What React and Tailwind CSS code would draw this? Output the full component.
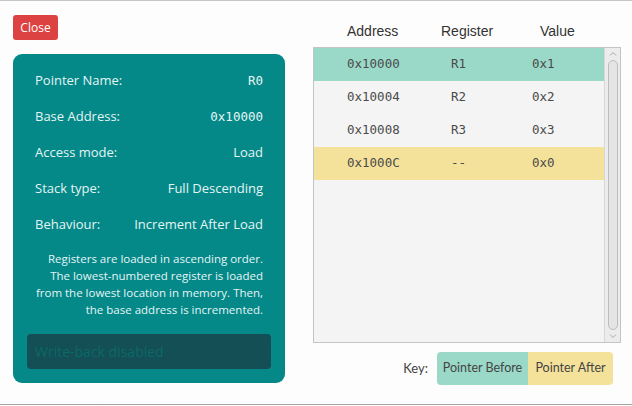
import React from 'react';

const sans = { fontFamily: '"Open Sans", "Noto Sans", sans-serif' };

const pointerInfo = [
  { label: 'Pointer Name:', value: 'R0', mono: true },
  { label: 'Base Address:', value: '0x10000', mono: true },
  { label: 'Access mode:', value: 'Load' },
  { label: 'Stack type:', value: 'Full Descending' },
  { label: 'Behaviour:', value: 'Increment After Load' },
];

const memoryRows = [
  { address: '0x10000', register: 'R1', value: '0x1', kind: 'before' },
  { address: '0x10004', register: 'R2', value: '0x2' },
  { address: '0x10008', register: 'R3', value: '0x3' },
  { address: '0x1000C', register: '--', value: '0x0', kind: 'after' },
];

const ghostRows = [
  { reg: 'R7', value: '0x0' },
  { reg: 'R8', value: '0x0' },
  { reg: '', value: '0x0' },
  { reg: '', value: '0x0' },
  { reg: '', value: '0x0' },
  { reg: '', value: 'FF00' },
  { reg: '', value: '0x0' },
  { reg: '', value: '0x2' },
];

// faint page that sits behind the modal
const GhostPage = () => (
  <div className="flex w-full h-full">
    <div className="w-[103px] h-full border-r border-[#f6f3ea]" />
    <div className="flex flex-col ml-[21px] -mt-[8px]">
      {ghostRows.map((row, i) => (
        <div key={i} className="flex items-center h-[35px] border-b border-[#f6f6f6]">
          <div className="w-[46px] h-[27px] rounded bg-[#f7f7f7] text-[#efefef] text-[15px] flex items-center justify-center">
            {row.reg}
          </div>
          <div className="w-[120px]" />
          <div className="font-['DejaVu_Sans_Mono',monospace] text-[14px] text-[#eeeeee]">{row.value}</div>
        </div>
      ))}
    </div>
    <div className="flex flex-col ml-[122px] -mt-[6px] gap-[10px]">
      {[0, 1].map((i) => (
        <div key={i} className="w-[137px] h-[24px] bg-[#f4f9f9]" />
      ))}
    </div>
  </div>
);

const ScrollBar = () => (
  <div className="w-[16px] h-full bg-[#ececec] border-l border-[#d8d8d8] flex flex-col items-center">
    <svg width="10" height="10" viewBox="0 0 10 10" className="mt-[1px]">
      <path d="M2 6.5 L5 3.5 L8 6.5" fill="none" stroke="#a8a8a8" strokeWidth="1" />
    </svg>
    <div className="flex-1 w-[10px] rounded-[5px] border border-[#bdbdbd] bg-[#e4e4e4] my-[1px]" />
    <svg width="10" height="10" viewBox="0 0 10 10" className="mb-[1px]">
      <path d="M2 3.5 L5 6.5 L8 3.5" fill="none" stroke="#a8a8a8" strokeWidth="1" />
    </svg>
  </div>
);

const App = () => {
  return (
    <div className="relative w-[632px] h-[406px] overflow-hidden bg-white" style={sans}>
      <GhostPage />

      {/* Modal */}
      <div className="absolute left-0 top-0 w-[632px] h-[405px] bg-[#fdfdfd]/95 border-t border-[#c6c6c6] border-b border-b-[#a4a4a4] flex pl-[13px]">
        {/* Left column */}
        <div className="w-[272px] flex flex-col pt-[14px]">
          <button className="self-start w-[45px] h-[25px] rounded-[3px] bg-[#dd4242] text-white text-[12px] leading-none">
            Close
          </button>

          <div className="mt-[14px] bg-[#048888] rounded-[9px] px-[14px] pt-[9px] pb-[14px] text-[#e4f5f5]">
            <div className="px-[8px]">
              {pointerInfo.map((item) => (
                <div key={item.label} className="flex justify-between items-center h-[36px] text-[13px]">
                  <span>{item.label}</span>
                  <span className={item.mono ? "font-['DejaVu_Sans_Mono',monospace] text-[12.5px]" : ''}>
                    {item.value}
                  </span>
                </div>
              ))}
              <p className="mt-[7px] text-right text-[11.5px] leading-[17px] whitespace-nowrap">
                Registers are loaded in ascending order.
                <br />
                The lowest-numbered register is loaded
                <br />
                from the lowest location in memory. Then,
                <br />
                the base address is incremented.
              </p>
            </div>
            <div className="mt-[16px] h-[35px] rounded-[4px] bg-[#134f55] text-[#0d6868] text-[14px] flex items-center px-[8px]">
              Write-back disabled
            </div>
          </div>
        </div>

        {/* Right column */}
        <div className="ml-[28px] w-[308px] flex flex-col">
          <div className="h-[46px] flex items-end pb-[5px] font-['Liberation_Sans',Arial,sans-serif] text-[14px] text-[#333]">
            <span className="ml-[34px] w-[94px]">Address</span>
            <span className="w-[99px]">Register</span>
            <span>Value</span>
          </div>

          <div className="h-[296px] border border-[#c4c4c4] bg-[#f4f4f4] flex">
            <div className="flex-1 flex flex-col">
              {memoryRows.map((row) => (
                <div
                  key={row.address}
                  className={`flex items-center h-[33px] font-['DejaVu_Sans_Mono',monospace] text-[12.5px] text-[#4a4a4a] ${
                    row.kind === 'before' ? 'bg-[#9ad9c7]' : row.kind === 'after' ? 'bg-[#f5e29a]' : ''
                  }`}
                >
                  <span className="ml-[33px] w-[104px]">{row.address}</span>
                  <span className="w-[81px]">{row.register}</span>
                  <span>{row.value}</span>
                </div>
              ))}
            </div>
            <ScrollBar />
          </div>

          <div className="mt-[9px] flex items-center justify-end pr-[8px] font-['Lato',sans-serif] text-[12.5px] text-[#444]">
            <span className="mr-[9px] text-[13px]">Key:</span>
            <div className="flex h-[33px] rounded-[4px] overflow-hidden">
              <span className="bg-[#9ad9c7] flex items-center w-[91px] justify-center">Pointer Before</span>
              <span className="bg-[#f5e29a] flex items-center w-[85px] justify-center">Pointer After</span>
            </div>
          </div>
        </div>
      </div>
    </div>
  );
};

export default App;
